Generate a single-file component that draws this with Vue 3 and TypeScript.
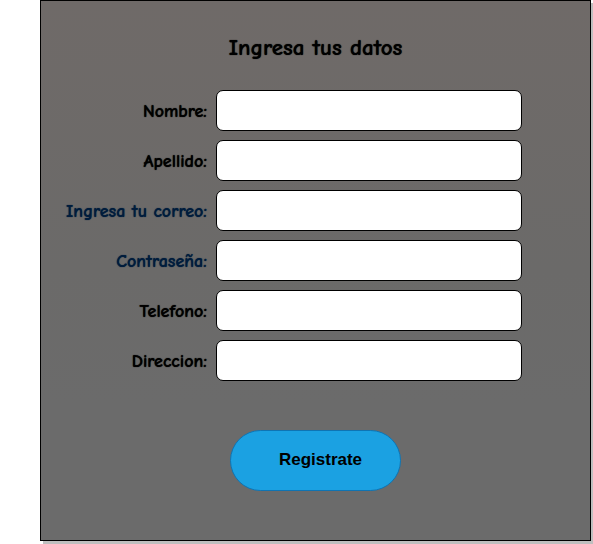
<script setup lang="ts">
import { reactive } from 'vue'

interface Field {
  id: string
  label: string
  type: string
  accent?: boolean
}

const fields: Field[] = [
  { id: 'nombre', label: 'Nombre:', type: 'text' },
  { id: 'apellido', label: 'Apellido:', type: 'text' },
  { id: 'correo', label: 'Ingresa tu correo:', type: 'email', accent: true },
  { id: 'clave', label: 'Contraseña:', type: 'password', accent: true },
  { id: 'telefono', label: 'Telefono:', type: 'tel' },
  { id: 'direccion', label: 'Direccion:', type: 'text' },
]

const values = reactive<Record<string, string>>({})
</script>

<template>
  <form class="panel" @submit.prevent>
    <h1 class="title">Ingresa tus datos</h1>
    <div class="fields">
      <div v-for="field in fields" :key="field.id" class="row">
        <label :for="field.id" class="label" :class="{ accent: field.accent }">{{ field.label }}</label>
        <input :id="field.id" v-model="values[field.id]" :type="field.type" class="input" />
      </div>
    </div>
    <button type="submit" class="submit">Registrate</button>
  </form>
</template>

<style>
body {
  background: #fff;
}
</style>

<style scoped>
.panel {
  box-sizing: border-box;
  margin: 0 2px 3px 40px;
  padding: 33px 0 49px;
  display: flex;
  flex-direction: column;
  border: 1px solid #000;
  background: linear-gradient(#6f6a68, #6b6a69 50%, #6b6b6b 75%);
  box-shadow: 3px 3px 0 #bfbfbf;
  font-family: "Comic Sans MS", "Comic Neue", "Open Sans", sans-serif;
  color: #000;
}

.title {
  margin: 0;
  font-size: 23px;
  font-weight: 700;
  line-height: 28px;
  text-align: center;
  text-shadow: 0 0 1px currentColor;
}

.fields {
  display: grid;
  gap: 9px;
  margin: 28px 68px 49px 8px;
}

.row {
  display: grid;
  grid-template-columns: 158px 1fr;
  align-items: center;
  column-gap: 9px;
}

.label {
  padding-top: 2px;
  font-size: 18px;
  font-weight: 700;
  line-height: 24px;
  text-align: right;
  text-shadow: 0 0 1px currentColor;
  white-space: nowrap;
}

.accent {
  color: #001c3c;
}

.input {
  box-sizing: border-box;
  width: 100%;
  min-width: 0;
  height: 41px;
  padding: 0 10px;
  border: 1px solid #000;
  border-radius: 7px;
  background: #fff;
  font: inherit;
}

.submit {
  align-self: center;
  padding: 20px 38px 21px 48px;
  border: 1px solid #0f74b3;
  border-radius: 31px;
  background: #1ba1e2;
  color: #000;
  font-family: "Liberation Sans", Arial, sans-serif;
  font-size: 17px;
  font-weight: 700;
  line-height: 18px;
}
</style>
